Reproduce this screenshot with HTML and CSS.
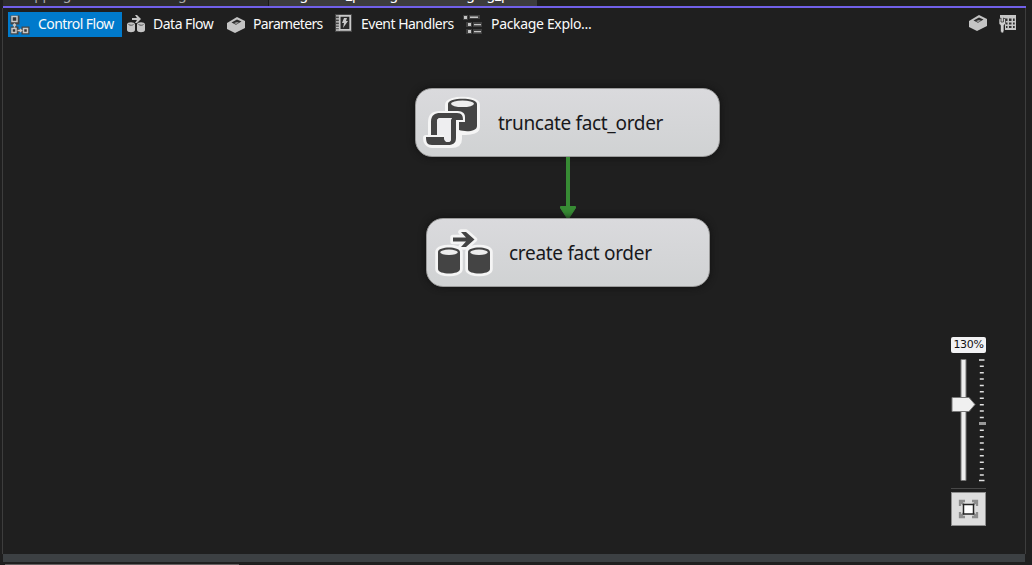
FILE: index.html
```html
<!DOCTYPE html>
<html lang="en">
<head>
<meta charset="utf-8">
<title>Package designer</title>
<link rel="stylesheet" href="styles.css">
</head>
<body>
<svg class="defs" width="0" height="0">
  <symbol id="package" viewBox="0 0 18 16"><path d="M0 6 10 0l8 4v7l-10 5-8-4z" fill="#c4c4c4"/><path d="m4.500 5.500 5.500-3 4.500 2-5.500 3.300z" fill="#2b2b2b"/><path d="M7 6l3-1 2 .8-3 1.500z" fill="#999"/></symbol>
  <symbol id="flow" viewBox="0 0 60 50">
    <g id="flow-shape"><path d="M18 9.500h13l-5-5.500h5l8.500 7.500-8.500 7.500h-5l5-5.500H18z"/><path d="M3 24v17c0 6 22 6 22 0V24c0-6-22-6-22 0zM33 24v17c0 6 22 6 22 0V24c0-6-22-6-22 0z"/></g>
  </symbol>
</svg>
<div class="window">
  <div class="tabs"><div class="tab"><span>Mapping orders.dtsx Design</span></div><div class="tab active"><span>Integration_package.dtsx - staging_prod</span></div></div>
  <div class="designer">
    <nav class="toolbar">
      <div class="item selected">
        <svg width="20" height="20" viewBox="0 0 20 20"><g fill="#444" stroke="#444" stroke-width="3"><path d="M2 2h6v6H2zM2 13h5v5H2zM13 13h5v5h-5zM5 7v6M7 15.500h6"/></g><g fill="#333" stroke="#c8c8c8" stroke-width="1.500"><path d="M2 1.500h5v5H2zM2 13.500h4v4H2zM13.500 13.500h4v4h-4zM4.500 8.500v4M3 10.500 4.500 9 6 10.500M7.500 15.500h4M10 14l1.500 1.500L10 17"/></g></svg>
        <span class="l1">Control Flow</span></div>
      <div class="item data">
        <svg width="19" height="18" viewBox="0 0 19 18" fill="#c4c4c4"><path d="M5 3h5L8 0h2l4 4-4 4H8l2-3H5z"/><path d="M0 9.500V15c0 3 8 3 8 0V9.500c0-3-8-3-8 0zM10 9.500V15c0 3 8 3 8 0V9.500c0-3-8-3-8 0z"/><path d="M1.500 9.500c2 1 3.500 1 5 0M11.500 9.500c2 1 3.500 1 5 0" fill="none" stroke="#555"/></svg>
        <span class="l2">Data Flow</span></div>
      <div class="item params"><svg width="18" height="16"><use href="#package"/></svg><span class="l3">Parameters</span></div>
      <div class="item events">
        <svg width="17" height="18" viewBox="0 0 17 18"><path d="M0 0h17v18H0z" fill="#454545"/><path d="M4.700 1.800h10.500v14H4.700z" fill="#292929" stroke="#c8c8c8" stroke-width="1.700"/><path d="M1 1.800h4M1 4.800h3M1 7.800h3M1 10.800h3M1 13.500h3M1 16h4" stroke="#c8c8c8" stroke-width="1.300"/><path d="M9 4h3l-1 3h2l-5 7 1-5H7z" fill="#c8c8c8"/></svg>
        <span class="l4">Event Handlers</span></div>
      <div class="item explorer">
        <svg width="20" height="20" viewBox="0 0 20 20"><path d="M0 0h5v5H0zM6 0h11v4H6zM3 7h6v5H3zM10 7h9v5h-9zM3 14h6v5H3zM10 14h9v5h-9z" fill="#404040"/><path d="M1 1h3v3H1zM7 1.500h8V3H7zM5 8h3v3H5zM11 9h7v1.300h-7zM5 15h3v3H5zM11 16h7v1.300h-7z" fill="#c4c4c4"/></svg>
        <span class="l5">Package Explo...</span></div>
      <div class="tools"><svg width="18" height="16"><use href="#package"/></svg>
        <svg width="18" height="18" viewBox="0 0 18 18"><path d="M1 0h16v15H6V8H1z" fill="#c6c6c6"/><path d="M6 3.500h2.500V6H6zM10 3.500h2.500V6H10zM14 3.500h1.700V6H14zM7 7.500h1.500v2H7zM10 7.500h2.500v2H10zM14 7.500h1.700v2H14zM7 11h1.500v2H7zM10 11h2.500v2H10zM14 11h1.700v2H14z" fill="#303030"/><path d="M0 4v4.500l1.500 2V16l1 2h1.500l1-2v-5.500l1.500-2V4L4.500 3v4H2V3z" fill="#d0d0d0" stroke="#292929" stroke-width=".7"/></svg></div>
    </nav>
    <main class="canvas">
      <div class="node truncate">
        <svg width="60" height="58" viewBox="0 0 60 58"><g stroke="#f5f5f5" stroke-width="6" stroke-linejoin="round" fill="#f5f5f5"><path d="M25 11c0-7 29-7 29 0v22c0 5-12 6-18 4v8c0 5-4 6-8 6H9c-4 0-6-3-6-7h5V28c0-7 5-8 9-8h8z"/></g><path d="M25 10c0-7 29-7 29 0v22c0 6-12 6-18 4v-8h6v-5c0-5-4-6-9-6h-8z" fill="#444"/><ellipse cx="39.500" cy="9.800" rx="11.500" ry="3.300" fill="#eee"/><path d="M8 41V28c0-7 4-9 9-9h17c5 0 6 3 6 7h-7v18c0 6-4 7-8 7H9c-5 0-6-3-6-8h18c0 3 2 5 4 5 2 0 3-1 3-4V26c0-2 0-2 2-2H18c-4 0-4 2-4 6v11z" fill="#444"/><path d="M14 28c0-3 1-4 4-4h11l-1 2v18c0 3-1 4-3 4-3 0-4-2-4-5v-2h-7z" fill="#eeeef0"/></svg>
        <span>truncate fact_order</span></div>
      <svg class="connector" width="18" height="63" viewBox="0 0 18 63"><path d="M9 0v52" stroke="#378b34" stroke-width="4"/><path d="M1.500 49.500h15v1.500L10 61H8L1.500 51z" fill="#378b34" stroke="#378b34"/></svg>
      <div class="node create">
        <svg width="60" height="50" viewBox="0 0 60 50"><use href="#flow-shape" fill="#f5f5f5" stroke="#f5f5f5" stroke-width="5.500" stroke-linejoin="round"/><use href="#flow-shape" fill="#444"/><ellipse cx="14" cy="24.300" rx="8.800" ry="2.700" fill="#eee"/><ellipse cx="44" cy="24.300" rx="8.800" ry="2.700" fill="#eee"/></svg>
        <span>create fact order</span></div>
      <aside class="zoom"><div class="percent">130%</div>
        <svg width="36" height="126" viewBox="0 0 36 126"><path d="M10 2.500h5v121h-5z" fill="#eee" stroke="#777"/><path d="M28 3h5.500M28 123.500h5.500" stroke="#e0e0e0" stroke-width="1.500"/><path d="M30.800 8.500v114" stroke="#e0e0e0" stroke-width="4" stroke-dasharray="1.500 4.900"/><path d="M28 65h7v3h-7z" fill="#999"/><path d="M1 40.500h17l6 7-6 7H1z" fill="#f0f0f0" stroke="#777"/></svg>
        <div class="rule"></div><button class="fit" aria-label="Fit"><svg width="22" height="20" viewBox="0 0 22 20"><path d="M2 7V2h5M14 2h5v5M19 13v5h-5M7 18H2v-5M2 2l4 4M19 2l-4 4M19 18l-4-4M2 18l4-4" fill="none" stroke="#8d8d8d" stroke-width="2.300"/><path d="M5.500 5.500h10v9.500h-10z" fill="#fff" stroke="#242424" stroke-width="1.500"/></svg></button>
      </aside>
    </main>
  </div>
  <div class="splitter"></div><div class="bottom"></div>
</div>
</body>
</html>
```
FILE: styles.css
```css
*{box-sizing:border-box}
body{margin:0;background:#1f1f1f;overflow:hidden}
.defs{position:absolute}
svg{display:block;flex:none}
.window{width:1032px;height:565px;display:flex;flex-direction:column;font-family:"Noto Sans",sans-serif;overflow:hidden}
.tabs{height:8px;margin:0 6px 0 3px;border-bottom:2px solid #7160e8;display:flex;overflow:hidden;background:#1f1f1f;color:#fff;font-size:14px;line-height:18px;white-space:nowrap}
.tab{width:266px;height:6px;background:#2d2d2d;padding-left:11px;border-right:1px solid #191919;color:#aaa}
.tab.active{width:268px;background:#3d3d3d;padding-left:5px;border:0;color:#fff}
.tab span{display:block;margin-top:-15px;letter-spacing:-.2px}
.designer{height:546px;margin:0 6px 0 2px;border:1px solid #3d3d3d;border-width:0 1px;display:flex;flex-direction:column;background:#1f1f1f}
.toolbar{display:flex;height:38px;padding:4px 8px 0 5px;color:#fafafa;font-size:14px;line-height:25px;white-space:nowrap}
.item{display:flex;height:25px;align-items:center}
.item span{height:25px;line-height:23px}
.selected{width:114px;background:#007acc;padding-left:2px;gap:8px}
.data{width:100px;padding-left:5px;gap:7px}
.data svg{margin-top:-2px}
.params{width:109px;padding-left:5px;gap:8px}
.events{width:129px;padding-left:4px;gap:9px}
.events svg{margin-top:-3px}
.explorer{padding-left:3px;gap:8px}
.l1{letter-spacing:-.55px}.l2{letter-spacing:-.5px}.l3{letter-spacing:-.65px}.l4{letter-spacing:-.5px}.l5{letter-spacing:-.33px}
.tools{margin-left:auto;display:flex;gap:12px;padding-top:3px}
.canvas{position:relative;flex:1}
.node{position:absolute;height:69px;border:1px solid #9b9b9b;border-radius:17px;background:linear-gradient(#dadadd,#d0d2d3);box-shadow:0 0 7px #111;display:flex;align-items:center;color:#18181b;font-size:19px;white-space:nowrap}
.node span{padding-top:1px}
.truncate{left:412px;top:42px;width:305px;padding-left:7px}
.truncate span{margin-left:15px;letter-spacing:-.33px}
.create{left:423px;top:172px;width:284px;padding-left:8px}
.create span{margin-left:14px;letter-spacing:-.3px}
.connector{position:absolute;left:556px;top:111px}
.zoom{position:absolute;left:948px;top:291px;width:36px}
.percent{height:16px;width:35px;border-radius:2px;background:#f2f2f4;color:#111;font:11px/15px "DejaVu Sans",sans-serif;letter-spacing:-.35px;text-align:center;margin-bottom:4px}
.rule{height:1px;background:#484848;margin:5px 1px 3px 0}
.fit{display:flex;align-items:center;justify-content:center;width:35px;height:34px;border:1px solid #8d8d8d;background:#ddd;padding:0}
.splitter{height:8px;margin:0 7px 0 3px;background:#3c4043}
.bottom{height:3px;margin-left:5px;width:234px;border-bottom:1px solid #655f60}
```
